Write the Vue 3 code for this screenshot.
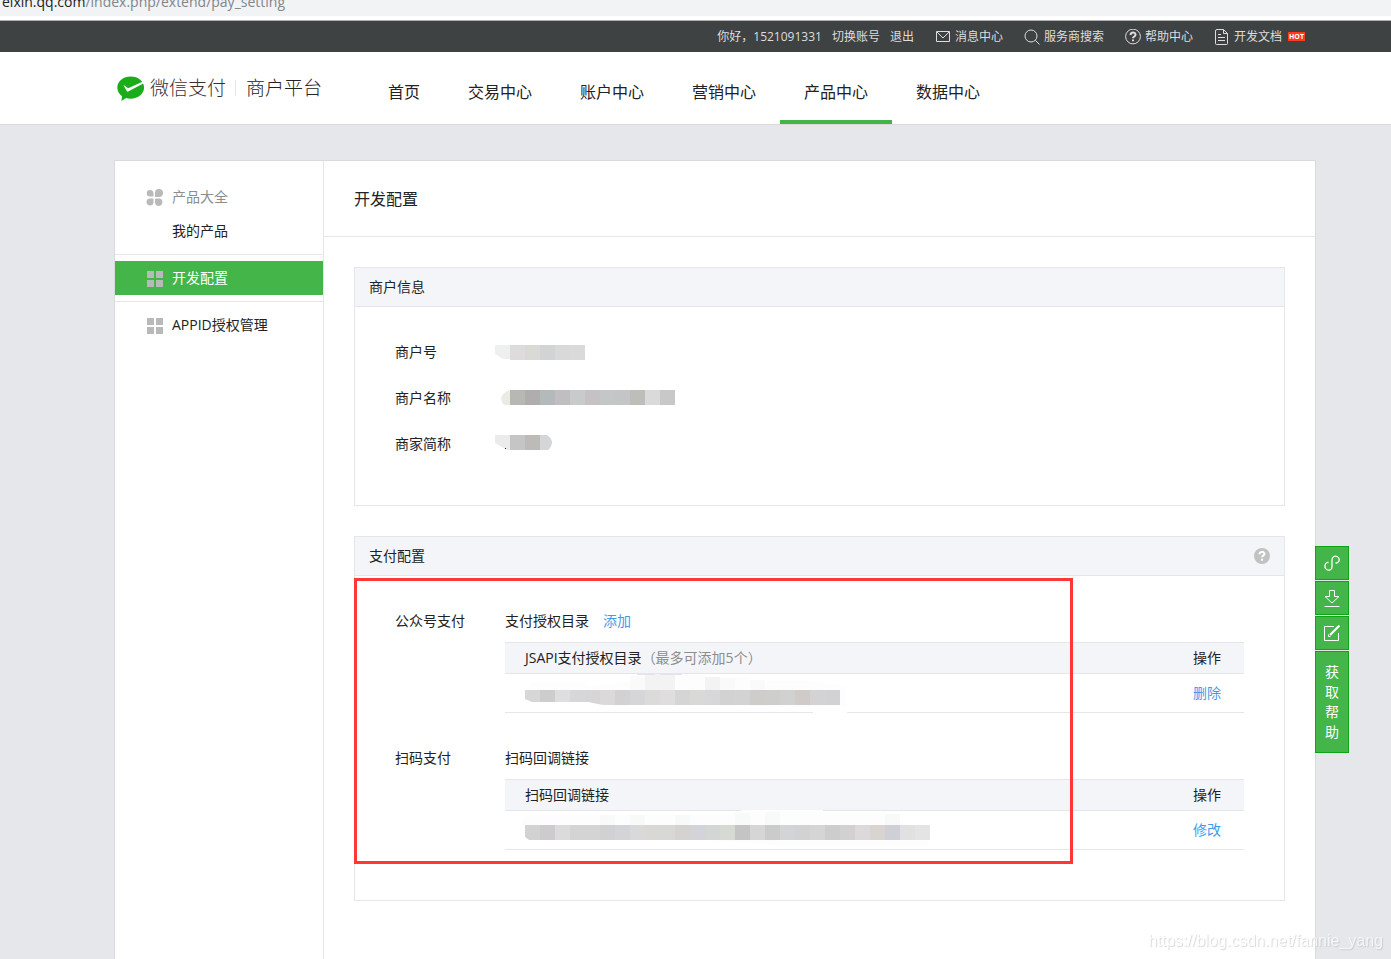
<script setup>
const navItems = [
  { label: '首页' },
  { label: '交易中心' },
  { label: '账户中心' },
  { label: '营销中心' },
  { label: '产品中心', active: true },
  { label: '数据中心' },
]

// Masked values are drawn as rows of 15px blocks.
const row = (x, y, colors) => colors.map((fill, i) => ({ x: x + i * 15, y, fill }))

const infoRows = [
  {
    label: '商户号',
    edge: { d: 'M0 16h15v14H8L0 25z', fill: '#eef0ef' },
    cells: row(15, 16, ['#dddbdc', '#d9d9d6', '#d2d3d5', '#d9d9d9', '#dadada']),
  },
  {
    label: '商户名称',
    edge: { d: 'M15 15v15H9Q6 27 6 23Q8 17 15 15z', fill: '#ebebe6' },
    cells: row(15, 15, ['#b7b8b2', '#afadad', '#b4b9ba', '#c0bec0', '#c9cbcb', '#c5c1c5', '#c5c7c6', '#c3c5c7', '#bdbeb9', '#dadadb', '#c8c8c8']),
  },
  {
    label: '商家简称',
    edge: { d: 'M0 14h15v15H12L0 22z', fill: '#ebebeb' },
    cells: row(15, 14, ['#c5c5c6', '#bdbbb8']),
    tail: { d: 'M45 14h7q5 3 5 8q-1 5-4 7h-8z', fill: '#d5d6d8' },
  },
]

const jsapiCells = row(0, 16, ['#d8d7d8', '#cecdce', '#dedddf', '#d7d7da', '#d7d6d6', '#dbd9da', '#d2d2d2', '#d6d6d9', '#dbdbda', '#dfdddd', '#d5d5d5', '#d9d9d7', '#d7d7d9', '#d2d2d2', '#d3d3d4', '#cfcdca', '#cececd', '#d1d1d1', '#d0cbc9', '#d3d3d4', '#d2d2d4'])
const scanCells = row(0, 14, ['#d2d2d2', '#cdcbce', '#dbdbdb', '#d4d4d4', '#d4d4d5', '#d1d1d1', '#d2d4d7', '#d9d9d9', '#d9d8d5', '#d8d8d6', '#d5d2d0', '#d2d4d9', '#d3d6d5', '#d7d9d3', '#c4c4c4', '#d6d6d6', '#cbcbcb', '#d2d4d7', '#d2d2d2', '#d5d5d5', '#cdcdcd', '#d2d0d1', '#dbd9db', '#d9d4d0', '#cfd0d5', '#e1e1e1', '#e4e4e4'])
</script>

<template>
  <div class="page">
    <div class="address"><div class="url">eixin.qq.com<span>/index.php/extend/pay_setting</span></div></div>

    <div class="topbar">
      <div class="topbar-inner">
        <div class="account">
          <span>你好，1521091331</span>
          <a href="#">切换账号</a>
          <a href="#">退出</a>
        </div>
        <a href="#" class="tool">
          <svg width="16" height="16" viewBox="0 0 16 16"><path d="M1.500 2.500h13v10h-13zM2 3l6 6 6-6" /></svg>消息中心
        </a>
        <a href="#" class="tool">
          <svg width="16" height="16" viewBox="0 0 16 16"><circle cx="7" cy="7" r="6" /><path d="M11.300 11.300l4.200 4.200" /></svg>服务商搜索
        </a>
        <a href="#" class="tool">
          <svg width="16" height="16" viewBox="0 0 16 16"><circle cx="8" cy="7.500" r="7.400" /><path class="bold" d="M5.600 5.900c0-3.200 4.900-3.200 4.900-.2 0 1.700-2.500 1.800-2.500 3.600M8 10.500v1.700" /></svg>帮助中心
        </a>
        <a href="#" class="tool">
          <svg width="16" height="16" viewBox="0 0 16 16"><path d="M1.500 2q0-1.500 1.500-1.500h6.500l4 4v10q0 1-1 1h-10q-1 0-1-1zM9.500.500v4h4M4 5.500h3M4 8.500h7M4 11.500h7" /></svg>开发文档<span class="hot">HOT</span>
        </a>
      </div>
    </div>

    <header class="header">
      <div class="header-inner">
        <a href="#" class="logo">
          <svg width="28" height="28" viewBox="0 0 28 28">
            <path fill="#1aad19" d="M13.700 2.500C6.300 2.500.300 7.300.300 13.500c0 3.700 1.900 6.600 4.800 8.700l-.7 4.800 4.700-2.900c1.500.4 3 .6 4.600.6 7.400 0 13.400-5 13.400-11.200S21.100 2.500 13.700 2.500z" />
            <path fill="#fff" d="M6.300 10.700l4.800 3.600L26 7.600l.8 1.700L11.200 17.500q-.9.500-1.500-.5z" />
          </svg>
          <span class="brand">微信支付</span>
          <span class="platform">商户平台</span>
        </a>
        <nav class="nav">
          <a v-for="item in navItems" :key="item.label" href="#" :class="{ active: item.active }">{{ item.label }}</a>
        </nav>
      </div>
    </header>

    <div class="card">
      <aside class="side">
        <div class="group first">
          <div class="item muted">
            <svg width="18" height="18" viewBox="0 0 18 18"><path d="M4 2a3.500 3.500 0 0 1 3.500 3.500V8Q7.500 8.500 7 8.500H4A3.250 3.250 0 0 1 4 2zM13 1a4 4 0 0 1 0 8H9.500Q9 9 9 8.500V5a4 4 0 0 1 4-4zM4 10.500h3q.5 0 .5.500v3.500A3.500 3.500 0 1 1 4 10.500zM9.500 10.500H13a3.700 3.700 0 1 1-4 4V11q0-.5.500-.5z" /></svg>
            产品大全
          </div>
          <a href="#" class="item sub">我的产品</a>
        </div>
        <div class="group">
          <a href="#" class="item active">
            <svg width="18" height="18" viewBox="0 0 18 18"><path d="M1 2h7v7H1zM10 2h7v7h-7zM1 11h7v7H1zM10 11h7v7h-7z" /></svg>
            开发配置
          </a>
        </div>
        <div class="group last">
          <a href="#" class="item">
            <svg width="18" height="18" viewBox="0 0 18 18"><path d="M1 2h7v7H1zM10 2h7v7h-7zM1 11h7v7H1zM10 11h7v7h-7z" /></svg>
            APPID授权管理
          </a>
        </div>
      </aside>

      <main class="main">
        <h1>开发配置</h1>

        <section class="panel">
          <h2>商户信息</h2>
          <dl class="info">
            <div v-for="r in infoRows" :key="r.label">
              <dt>{{ r.label }}</dt>
              <dd>
                <svg class="mask" width="190" height="46" viewBox="0 0 190 46">
                  <path :d="r.edge.d" :fill="r.edge.fill" />
                  <rect v-for="c in r.cells" :key="c.x" :x="c.x" :y="c.y" width="15" height="15" :fill="c.fill" />
                  <path v-if="r.tail" :d="r.tail.d" :fill="r.tail.fill" />
                  <rect v-if="r.tail" x="10" y="27" width="1" height="1" fill="#222" />
                </svg>
              </dd>
            </div>
          </dl>
        </section>

        <section class="panel">
          <h2>
            支付配置
            <button type="button" class="help" aria-label="帮助">
              <svg width="16" height="16" viewBox="0 0 16 16"><circle cx="8" cy="8" r="8" fill="#c2c2c2" /><path d="M5.500 6.300c0-3.200 5-3.200 5-.2 0 1.600-2.500 1.600-2.500 3.200M8 10.700v2" fill="none" stroke="#fff" stroke-width="2" /></svg>
            </button>
          </h2>
          <div class="config">
            <div class="config-row">
              <div class="config-label">公众号支付</div>
              <div class="config-body">
                <div class="config-title">支付授权目录<a href="#">添加</a></div>
                <table>
                  <thead>
                    <tr><th>JSAPI支付授权目录<span>（最多可添加5个）</span></th><th class="op">操作</th></tr>
                  </thead>
                  <tbody>
                    <tr>
                      <td>
                        <svg class="mask" width="330" height="38" viewBox="0 0 330 38">
                          <path d="M3 16q1-8 7-8h50v3h15v-1q23 0 29-4 4-5 10-5h66v3h45v3h60l35 5v21h-50l-120-3z" fill="#fdfdfd" />
                          <path d="M288 37h34v3h-34z" fill="#fff" />
                          <path d="M105 2h15v14h-15zM195 4h15v12h-15zM225 6h15v10h-15z" fill="#fafafa" />
                          <path d="M120 0h30v16h-30zM180 3h15v13h-15z" fill="#f3f3f3" />
                          <path d="M112-1h18v2h-18zM135-1h22v2h-22z" fill="#e4e4ea" />
                          <rect v-for="c in jsapiCells" :key="c.x" :x="c.x" :y="c.y" width="15" height="15" :fill="c.fill" />
                          <path d="M0 25l7 3h38l18 0 15 3H0z" fill="#fff" />
                        </svg>
                      </td>
                      <td class="op"><a href="#">删除</a></td>
                    </tr>
                  </tbody>
                </table>
              </div>
            </div>
            <div class="config-row">
              <div class="config-label">扫码支付</div>
              <div class="config-body">
                <div class="config-title">扫码回调链接</div>
                <table>
                  <thead>
                    <tr><th>扫码回调链接</th><th class="op">操作</th></tr>
                  </thead>
                  <tbody>
                    <tr>
                      <td>
                        <svg class="mask" width="410" height="38" viewBox="0 0 410 38">
                          <path d="M-3 14q0-10 9-10h195l17-5h80v2h62l25 13h18v15q3 6-5 6H260z" fill="#fdfdfd" />
                          <path d="M75 4h15v10H75zM105 4h15v10h-15zM150 4h15v10h-15zM210 2h15v12h-15zM240 1h15v13h-15zM360 3h15v11h-15z" fill="#f8f9f9" />
                          <rect v-for="c in scanCells" :key="c.x" :x="c.x" :y="c.y" width="15" height="15" :fill="c.fill" />
                          <path d="M0 26l4 3H0z" fill="#fff" />
                        </svg>
                      </td>
                      <td class="op"><a href="#">修改</a></td>
                    </tr>
                  </tbody>
                </table>
              </div>
            </div>
          </div>
          <div class="highlight"></div>
        </section>
      </main>
    </div>

    <div class="float">
      <button type="button" aria-label="链接">
        <svg width="18" height="18" viewBox="0 0 18 18"><path d="M5.500 8.500H4C1.500 9.500 1 14 3.500 15.500c2.500 1.500 5.500.5 5.500-2.500V6c0-3 2.500-4.500 5-3.500 3 1.200 3 5.500 0 6.500h-1.500" stroke-width="1.300" /></svg>
      </button>
      <button type="button" aria-label="下载">
        <svg width="16" height="18" viewBox="0 0 16 18"><path d="M5.500 1.500h5v6h4.500L8 14 1 7.500h4.500zM.500 17.500h15" /></svg>
      </button>
      <button type="button" aria-label="编辑">
        <svg width="16" height="16" viewBox="0 0 16 16"><path d="M10 1.500H.500v14h14V8M4.500 9.500v2h2" /><path d="M6 10L15.500.500" stroke-width="2.200" /></svg>
      </button>
      <button type="button" class="get-help">获取帮助</button>
    </div>

    <div class="watermark">https://blog.csdn.net/fannie_yang</div>
  </div>
</template>

<style>
body {
  background: #e6e7eb;
}
</style>

<style scoped>
.page {
  display: flex;
  flex-direction: column;
  min-height: 100vh;
  font-family: "Open Sans", "Noto Sans CJK SC", sans-serif;
  font-size: 14px;
  line-height: 24px;
  color: #222;
}
a {
  color: inherit;
  text-decoration: none;
}
button {
  padding: 0;
  border: 0;
  background: none;
  font: inherit;
  cursor: pointer;
}
svg {
  display: block;
  flex: none;
}

.address {
  height: 16px;
  border-bottom: 4px solid #fff;
  background: #f1f3f4;
}
.url {
  display: flex;
  justify-content: flex-end;
  width: 285px;
  height: 16px;
  font-size: 14px;
  line-height: 4px;
  white-space: nowrap;
}
.url span {
  color: #80868b;
}

.topbar {
  border-top: 1px solid #b0b2b2;
  background: #3f4242;
  color: #ddd;
  font-size: 12px;
  line-height: 31px;
}
.topbar-inner {
  display: flex;
  justify-content: flex-end;
  gap: 21px;
  margin: 0 86px 0 114px;
  white-space: nowrap;
}
.account {
  display: flex;
  gap: 10px;
}
.tool {
  display: flex;
  align-items: center;
  gap: 4px;
}
.tool svg {
  fill: none;
  stroke: #ddd;
}
.tool .bold {
  stroke-width: 2;
}
.hot {
  width: 17px;
  height: 9px;
  margin-left: 2px;
  background: #ff3b1f;
  color: #fff;
  font-size: 7px;
  font-weight: 700;
  line-height: 9px;
  text-align: center;
}

.header {
  border-bottom: 1px solid #d9dadc;
  background: #fff;
}
.header-inner {
  display: flex;
  gap: 42px;
  height: 72px;
  margin: 0 75px 0 114px;
  white-space: nowrap;
}
.logo {
  display: flex;
  align-items: center;
  padding-left: 3px;
  font-size: 19px;
  font-weight: 300;
}
.brand {
  margin: 0 9px 0 5px;
  color: #3b2f31;
}
.platform {
  padding-left: 10px;
  border-left: 1px solid #e6e7eb;
  line-height: 16px;
}
.nav {
  display: flex;
  font-size: 16px;
}
.nav a {
  padding: 12px 24px 0;
  border-bottom: 4px solid transparent;
  line-height: 56px;
}
.nav .active {
  border-color: #44b549;
}

.card {
  display: flex;
  flex: 1;
  margin: 35px 75px 0 114px;
  border: 1px solid #d9dadc;
  border-bottom: 0;
  background: #fff;
}
.side {
  flex: none;
  width: 208px;
  border-right: 1px solid #e4e6e9;
}
.group {
  padding: 6px 0;
  border-bottom: 1px solid #e4e6e9;
}
.group.first {
  padding-top: 19px;
}
.group.last {
  border-bottom: 0;
}
.item {
  display: flex;
  align-items: center;
  gap: 8px;
  height: 34px;
  padding-left: 31px;
}
.item svg {
  fill: #b9b9b9;
}
.item.muted {
  color: #8d8d8d;
}
.item.sub {
  padding-left: 57px;
}
.item.active {
  background: #44b549;
  color: #fff;
}

.main {
  flex: 1;
  min-width: 0;
}
h1 {
  margin: 0;
  padding: 2px 0 0 30px;
  border-bottom: 1px solid #e4e6e9;
  font-size: 16px;
  font-weight: 400;
  line-height: 73px;
}
.panel {
  position: relative;
  margin: 30px;
  border: 1px solid #e4e6e9;
}
h2 {
  display: flex;
  align-items: center;
  justify-content: space-between;
  margin: 0;
  padding: 0 14px;
  border-bottom: 1px solid #e4e6e9;
  background: #f4f5f9;
  font-size: 14px;
  font-weight: 400;
  line-height: 38px;
}
.info {
  margin: 0;
  padding: 22px 40px 38px;
}
.info > div {
  display: flex;
  line-height: 46px;
}
.info dt {
  width: 100px;
}
.info dd {
  margin: 0;
}
.mask {
  overflow: visible;
}
.config {
  display: flex;
  flex-direction: column;
  gap: 33px;
  padding: 33px 40px 50px;
}
.config-row {
  display: flex;
}
.config-label {
  flex: none;
  width: 110px;
}
.config-body {
  flex: 1;
}
.config-title {
  display: flex;
  gap: 14px;
  margin-bottom: 9px;
}
.config a {
  color: #459ae9;
}
table {
  width: 100%;
  border-spacing: 0;
  table-layout: fixed;
}
th,
td {
  padding: 0 0 0 20px;
  border-bottom: 1px solid #e4e6e9;
  text-align: left;
}
th {
  height: 30px;
  border-top: 1px solid #e4e6e9;
  background: #f4f5f9;
  font-weight: 400;
}
th span {
  color: #8d8d8d;
}
td {
  height: 38px;
}
.op {
  width: 51px;
  padding-left: 0;
}
.highlight {
  position: absolute;
  top: 41px;
  right: 211px;
  bottom: 36px;
  left: -1px;
  border: 3px solid #ff3737;
  pointer-events: none;
}

.float {
  position: fixed;
  right: 42px;
  bottom: 206px;
  display: flex;
  flex-direction: column;
  gap: 1px;
  width: 34px;
}
.float button {
  display: flex;
  align-items: center;
  justify-content: center;
  height: 34px;
  border: 1px solid #0ea514;
  background: #44b549;
  color: #fff;
}
.float svg {
  fill: none;
  stroke: #fff;
}
.float .get-help {
  height: 102px;
  padding: 0 9px;
  line-height: 20px;
}
.watermark {
  position: fixed;
  right: 8px;
  bottom: 6px;
  color: #fff;
  font-family: "Liberation Sans", Arial, sans-serif;
  font-size: 16px;
  text-shadow: 1px 1px 1px #bbb;
  opacity: 0.6;
}
</style>
